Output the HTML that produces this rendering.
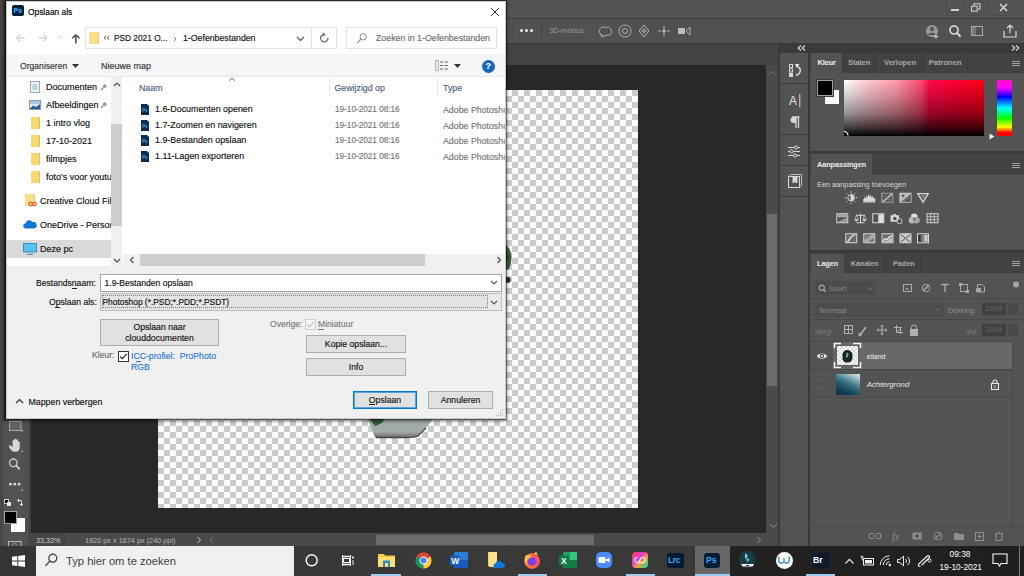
<!DOCTYPE html>
<html><head><meta charset="utf-8">
<style>
*{margin:0;padding:0;box-sizing:border-box}
html,body{width:1024px;height:576px;overflow:hidden;background:#282828;font-family:"Liberation Sans",sans-serif}
.a{position:absolute}
.t{position:absolute;white-space:pre;line-height:1}
.d .t,.dt{-webkit-text-stroke:0.15px currentColor}
</style></head><body>
<div class="a" style="left:0;top:0;width:1024px;height:576px;overflow:hidden">

<!-- ===== PHOTOSHOP BACKGROUND ===== -->
<div class="a" id="menubar" style="left:0;top:0;width:1024px;height:18px;background:#535353"></div>
<div class="a" style="left:0;top:18px;width:1024px;height:1px;background:#3e3e3e"></div>
<div class="a" id="optbar" style="left:0;top:19px;width:1024px;height:24px;background:#515151"></div>
<div class="a" style="left:0;top:43px;width:1024px;height:1px;background:#383838"></div>
<div class="a" id="tabbar" style="left:0;top:44px;width:778px;height:21px;background:#434343"></div>
<!-- canvas area -->
<div class="a" id="canvasbg" style="left:31px;top:65px;width:735px;height:468px;background:#282828"></div>
<!-- left toolbar -->
<div class="a" id="toolbar" style="left:0;top:44px;width:31px;height:502px;background:linear-gradient(to right,#505050 0,#535353 20px,#4e4e4e 28px,#3a3a3a 31px)"></div>
<!-- canvas checker -->
<div class="a" id="checker" style="left:158px;top:90px;width:480px;height:418px;background-color:#fff;background-image:linear-gradient(45deg,#cbcbcb 25%,transparent 25%,transparent 75%,#cbcbcb 75%),linear-gradient(45deg,#cbcbcb 25%,transparent 25%,transparent 75%,#cbcbcb 75%);background-size:12px 12px;background-position:0 0,6px 6px"></div>

<!-- vertical scrollbar -->
<div class="a" style="left:766px;top:65px;width:12px;height:468px;background:#4a4a4a"></div>
<div class="a" style="left:767px;top:214px;width:10px;height:172px;background:#6b6b6b"></div>
<!-- status bar -->
<div class="a" id="status" style="left:30px;top:533px;width:748px;height:13px;background:#4a4a4a"></div>
<div class="a" style="left:30px;top:533px;width:36px;height:13px;background:#464646"></div>
<div class="a" style="left:376px;top:535px;width:218px;height:10px;background:#6b6b6b"></div>

<!-- right panel column -->
<div class="a" style="left:778px;top:43px;width:246px;height:503px;background:#3a3a3a"></div>
<div class="a" id="iconcol" style="left:780px;top:53px;width:28px;height:493px;background:#535353"></div>
<div class="a" id="mainpanel" style="left:810px;top:53px;width:214px;height:493px;background:#535353"></div>


<!-- window controls -->
<div class="a" style="left:946px;top:0;width:78px;height:16px;border-left:1px solid #4a4a4a;border-bottom:1px solid #4c4c4c"></div>
<div class="a" style="left:963px;top:0;width:1px;height:15px;background:#4d4d4d"></div>
<div class="a" style="left:988px;top:0;width:1px;height:15px;background:#4d4d4d"></div>
<div class="a" style="left:951px;top:9px;width:8px;height:1.5px;background:#d0d0d0"></div>
<svg class="a" style="left:971px;top:3px" width="10" height="9" viewBox="0 0 10 9"><rect x="0.6" y="3.2" width="5.6" height="5" fill="none" stroke="#d0d0d0" stroke-width="1.1"/><path d="M3 3V0.8H9V6H6.4" fill="none" stroke="#d0d0d0" stroke-width="1.1"/></svg>
<svg class="a" style="left:999px;top:3px" width="9" height="9" viewBox="0 0 9 9"><path d="M1 1L8 8M8 1L1 8" stroke="#d8d8d8" stroke-width="1.5"/></svg>
<!-- options bar -->
<div class="a" style="left:512px;top:24px;width:1px;height:14px;background:#484848"></div>
<div class="a" style="left:520px;top:29px;width:3px;height:3px;border-radius:50%;background:#e6e6e6"></div>
<div class="a" style="left:525px;top:29px;width:3px;height:3px;border-radius:50%;background:#e6e6e6"></div>
<div class="a" style="left:530px;top:29px;width:3px;height:3px;border-radius:50%;background:#e6e6e6"></div>
<div class="a" style="left:541px;top:24px;width:1px;height:14px;background:#444"></div>
<div class="t" style="left:549px;top:26.8px;font-size:7.7px;letter-spacing:-0.1px;color:#969696">3D-modus:</div>
<svg class="a" style="left:597px;top:23px" width="96" height="16" viewBox="0 0 96 16" fill="none" stroke="#b0b0b0" stroke-width="1">
 <path d="M2 8C3 4 7 3 9 5C11 3 15 5 14 8C16 10 13 13 10 12C8 14 3 13 2 8Z"/><path d="M3 11L6 13L4 14" />
 <circle cx="28" cy="8" r="6"/><circle cx="28" cy="8" r="2.5"/>
 <path d="M47 2L52 8L47 14L42 8Z"/><path d="M44 8H50M47 5V11"/>
 <path d="M67 3V6M67 10V13M61 8H64M70 8H73"/><circle cx="67" cy="8" r="1.3" fill="#bdbdbd"/>
 <rect x="81" y="5" width="7" height="6" fill="#bdbdbd" stroke="none"/><path d="M89 8L93 4V12Z"/>
</svg>
<svg class="a" style="left:922px;top:22px" width="96" height="18" viewBox="0 0 96 18">
 <circle cx="10" cy="9" r="6" fill="#9a9a9a"/><circle cx="10" cy="7" r="2.2" fill="#535353"/><path d="M6 13C7 10 13 10 14 13Z" fill="#535353"/><path d="M14 12V17M11.5 14.5H16.5" stroke="#cfcfcf" stroke-width="1"/>
 <circle cx="32" cy="8" r="4" fill="none" stroke="#e0e0e0" stroke-width="1.6"/><path d="M35 11L38.5 14.5" stroke="#e0e0e0" stroke-width="1.8"/>
 <rect x="49.5" y="4.5" width="11" height="9" fill="none" stroke="#a8a8a8"/><rect x="50" y="5" width="4" height="8" fill="#777"/>
 <path d="M82 9V15H94V9" fill="none" stroke="#d8d8d8" stroke-width="1.2"/><path d="M88 11V3M85 6L88 3L91 6" fill="none" stroke="#d8d8d8" stroke-width="1.2"/>
</svg>

<!-- right panel strip -->
<svg class="a" style="left:797px;top:45px" width="9" height="6" viewBox="0 0 9 6"><path d="M4 0.5L1.2 3L4 5.5M8 0.5L5.2 3L8 5.5" stroke="#d8d8d8" stroke-width="1.2" fill="none"/></svg>
<svg class="a" style="left:1011px;top:45px" width="9" height="6" viewBox="0 0 9 6"><path d="M1 0.5L3.8 3L1 5.5M5 0.5L7.8 3L5 5.5" stroke="#d8d8d8" stroke-width="1.2" fill="none"/></svg>
<!-- icon column groups -->
<div class="a" style="left:780px;top:53px;width:28px;height:30px;background:#535353"></div>
<div class="a" style="left:780px;top:83px;width:28px;height:1px;background:#3e3e3e"></div>
<div class="a" style="left:780px;top:134px;width:28px;height:1px;background:#3e3e3e"></div>
<div class="a" style="left:780px;top:165px;width:28px;height:1px;background:#3e3e3e"></div>
<div class="a" style="left:780px;top:196px;width:28px;height:1px;background:#3e3e3e"></div>
<svg class="a" style="left:780px;top:53px" width="28" height="143" viewBox="0 0 28 143" fill="none" stroke="#d8d8d8">
 <path d="M7 3.5H21M7 5H21" stroke="#5e5e5e" stroke-width="0.6" stroke-dasharray="1 1"/>
 <rect x="9.5" y="11.5" width="3" height="3"/><rect x="9.5" y="16" width="3" height="3"/><rect x="9" y="20" width="4" height="4" fill="#d8d8d8" stroke="none"/>
 <path d="M15 11L19.5 11L16.5 14.8Z" fill="#e8e8e8" stroke="none"/><path d="M16.8 13.3Q20.8 14.5 20.2 18.2Q19.6 21.8 15.8 22.2" stroke-width="1.5"/>
 <path d="M7 34.5H21M7 36H21" stroke="#5e5e5e" stroke-width="0.6" stroke-dasharray="1 1"/>
 <text x="9" y="51.8" font-family="Liberation Sans" font-size="12" fill="#e0e0e0" stroke="none">A</text><path d="M19.8 41V54" stroke-width="1"/>
 <path d="M12 64H19.5M16 64V75M18.5 64V75" stroke-width="1.3"/><path d="M16 64H13.5A3 3 0 0 0 13.5 70H16Z" fill="#d8d8d8" stroke="none"/>
 <path d="M7 85.5H21M7 87H21" stroke="#5e5e5e" stroke-width="0.6" stroke-dasharray="1 1"/>
 <path d="M8 94.5H20M8 98.5H20M8 102.5H20" stroke-width="1"/><circle cx="16" cy="94.5" r="1.6" fill="#535353"/><circle cx="11.5" cy="98.5" r="1.6" fill="#535353"/><circle cx="15" cy="102.5" r="1.6" fill="#535353"/>
 <path d="M7 116.5H21M7 118H21" stroke="#5e5e5e" stroke-width="0.6" stroke-dasharray="1 1"/>
 <rect x="8.5" y="123.5" width="11" height="11"/><path d="M13 124V130L15 128.5L17 130V124" fill="#d8d8d8"/><path d="M8.5 123.5L10.5 121.5H21.5V132.5L19.5 134.5" stroke-width="0.8"/>
</svg>

<!-- Kleur panel tabs -->
<div class="a" style="left:810px;top:53px;width:214px;height:20px;background:#424242"></div>
<div class="a" style="left:811px;top:53px;width:31px;height:20px;background:#535353"></div>
<div class="a" style="left:842px;top:53px;width:1px;height:20px;background:#3a3a3a"></div>
<div class="a" style="left:875px;top:53px;width:1px;height:20px;background:#3a3a3a"></div>
<div class="a" style="left:923px;top:53px;width:1px;height:20px;background:#3a3a3a"></div>
<div class="a" style="left:967px;top:53px;width:1px;height:20px;background:#3a3a3a"></div>
<div class="t" style="left:817.5px;top:59.3px;font-size:7.6px;letter-spacing:-0.25px;font-weight:bold;color:#f0f0f0">Kleur</div>
<div class="t" style="left:848px;top:59.3px;font-size:7.6px;letter-spacing:-0.1px;font-weight:bold;color:#a8a8a8">Stalen</div>
<div class="t" style="left:884px;top:59.3px;font-size:7.6px;font-weight:bold;color:#a8a8a8">Verlopen</div>
<div class="t" style="left:928.7px;top:59.3px;font-size:7.6px;font-weight:bold;color:#a8a8a8">Patronen</div>
<svg class="a" style="left:1011px;top:60px" width="10" height="7" viewBox="0 0 10 7"><path d="M1 1.5H9M1 3.5H9M1 5.5H9" stroke="#a0a0a0" stroke-width="1"/></svg>
<!-- swatches -->
<div class="a" style="left:825px;top:89.5px;width:14px;height:14px;background:#fff"></div>
<div class="a" style="left:816.5px;top:80px;width:16px;height:16px;background:#000;border:1px solid #9e9e9e;box-shadow:0 0 0 1px #3a3a3a"></div>
<!-- color field -->
<div class="a" style="left:844px;top:79.5px;width:140px;height:56.5px;background:linear-gradient(to bottom,rgba(0,0,0,0) 0%,rgba(0,0,0,.18) 30%,rgba(0,0,0,.42) 60%,rgba(0,0,0,.75) 85%,#000 100%),linear-gradient(to right,#fff 0%,#ffc8d2 18%,#ff98aa 38%,#ff4a70 55%,#ff0848 61%,#ff0030 80%,#ff0018 100%)"></div>
<svg class="a" style="left:839px;top:130px" width="12" height="12" viewBox="0 0 12 12"><path d="M5 1.5A4 4 0 0 1 9 5.5" stroke="#fff" stroke-width="1.2" fill="none"/><path d="M5 3A2.6 2.6 0 0 1 7.6 5.6" stroke="#000" stroke-width="1" fill="none"/></svg>
<div class="a" style="left:997px;top:79.5px;width:14.5px;height:56.5px;background:linear-gradient(to bottom,#ff10c0 0%,#ff00ff 14%,#0000ff 30%,#00ffff 50%,#00ff00 68%,#ffff00 84%,#ff0000 94%,#ff0000 100%)"></div>
<svg class="a" style="left:989px;top:133px" width="6" height="7" viewBox="0 0 6 7"><path d="M0.5 0.5L5.5 3.5L0.5 6.5Z" fill="#f0f0f0"/></svg>
<div class="a" style="left:810px;top:151px;width:214px;height:2px;background:#3a3a3a"></div>

<!-- Aanpassingen -->
<div class="a" style="left:810px;top:153px;width:214px;height:22px;background:#424242"></div>
<div class="a" style="left:811px;top:154px;width:61px;height:21px;background:#535353"></div>
<div class="t" style="left:817px;top:160.5px;font-size:7.2px;font-weight:bold;color:#f0f0f0">Aanpassingen</div>
<svg class="a" style="left:1011px;top:162px" width="10" height="7" viewBox="0 0 10 7"><path d="M1 1.5H9M1 3.5H9M1 5.5H9" stroke="#a0a0a0" stroke-width="1"/></svg>
<div class="t" style="left:817px;top:180.5px;font-size:7.35px;color:#d6d6d6">Een aanpassing toevoegen</div>
<svg class="a" style="left:830px;top:190px" width="120" height="56" viewBox="0 0 120 56" fill="none" stroke="#d8d8d8" stroke-width="1"><defs><linearGradient id="gm"><stop offset="0" stop-color="#222"/><stop offset="1" stop-color="#eee"/></linearGradient></defs><g transform="translate(15.00,2.75)"><circle cx="6" cy="5" r="3.2"/><path d="M6 1.8A3.2 3.2 0 0 1 6 8.2Z" fill="#d8d8d8"/><path d="M6 -1.5V0.2M6 9.8V11.5M-0.5 5H1.2M10.8 5H12.5M1.5 0.5L2.6 1.6M9.4 8.4L10.5 9.5M1.5 9.5L2.6 8.4M9.4 1.6L10.5 0.5" stroke-width="0.9"/></g><g transform="translate(33.25,2.75)"><path d="M0 10V7L1.5 4L2.5 6L3.5 2L4.5 5L5.5 1L6.5 4L7.5 2L8.5 5L9.5 3L10.5 6L12 5V10Z" fill="#d8d8d8" stroke="none"/><path d="M0 9.5H12" stroke="#888"/></g><g transform="translate(51.25,2.75)"><rect x="0.5" y="0.5" width="11" height="9" stroke="#a0a0a0"/><path d="M4 0.5V9.5M8 0.5V9.5M0.5 3.5H11.5M0.5 6.5H11.5" stroke="#7a7a7a" stroke-width="0.7"/><path d="M1 9C4 8 6 5 11 1" stroke="#d8d8d8" stroke-width="1.1"/></g><g transform="translate(69.50,2.75)"><rect x="0.5" y="0.5" width="11" height="9" fill="#bdbdbd" stroke="#d8d8d8"/><path d="M1 9.5L11.5 1V9.5Z" fill="#6a6a6a" stroke="none"/><path d="M2 3H5M3.5 1.5V4.5M7 7.5H10" stroke="#333" stroke-width="0.8"/></g><g transform="translate(87.00,2.75)"><path d="M0.8 0.8H11.2L6 9.5Z" stroke-width="1.3"/><path d="M3.5 2.5H8.5L6 6.5Z" fill="#8a8a8a" stroke="none"/></g><g transform="translate(6.25,23.25)"><rect x="0.5" y="0.5" width="11" height="9"/><rect x="1" y="1" width="10" height="3" fill="#9a9a9a" stroke="none"/><path d="M3.5 1V4M6 1V4M8.5 1V4" stroke-width="0.6"/><path d="M1 9L11 4V9Z" fill="#c8c8c8" stroke="none" opacity=".6"/></g><g transform="translate(24.50,23.25)"><path d="M6 0.5V9.5M2 9.5H10M1.5 2H10.5" stroke-width="1"/><path d="M0 6A2 2 0 0 0 4 6ZM8 6A2 2 0 0 0 12 6Z" fill="#d8d8d8" stroke="none"/><path d="M2 2L0.3 6M2 2L3.7 6M10 2L8.3 6M10 2L11.7 6" stroke-width="0.7"/></g><g transform="translate(42.25,23.25)"><rect x="0.5" y="0.5" width="11" height="9"/><rect x="6" y="1" width="5.5" height="8.5" fill="#e0e0e0" stroke="none"/></g><g transform="translate(60.00,23.25)"><rect x="0.5" y="2" width="8.5" height="6.5" fill="#d8d8d8" stroke="none"/><rect x="3" y="0.8" width="3" height="1.5" fill="#d8d8d8" stroke="none"/><circle cx="4.8" cy="5.2" r="1.8" fill="#535353" stroke="none"/><circle cx="9.5" cy="8" r="2.6" fill="#535353" stroke="#d8d8d8" stroke-width="0.9"/></g><g transform="translate(78.25,23.25)"><circle cx="6" cy="3.5" r="3.3" fill="#e0e0e0" stroke="none"/><circle cx="3.8" cy="7" r="3.3" fill="#bcbcbc" stroke="none"/><circle cx="8.2" cy="7" r="3.3" fill="#a5a5a5" stroke="none"/><circle cx="6" cy="5.8" r="1.5" fill="#707070" stroke="none"/></g><g transform="translate(96.50,23.25)"><rect x="0.5" y="0.5" width="11" height="9"/><path d="M0.5 3.5H11.5M0.5 6.5H11.5M4.2 0.5V9.5M7.8 0.5V9.5" stroke-width="0.8"/></g><g transform="translate(15.25,43.25)"><rect x="0.5" y="0.5" width="11" height="9" fill="#6a6a6a"/><path d="M2 8.5C4 8 5 2 10 1.5" stroke-width="1.6"/></g><g transform="translate(33.25,43.25)"><rect x="0.5" y="0.5" width="11" height="9" fill="#7a7a7a"/><path d="M1 8L10 1.5M3 9L11 3" stroke="#bdbdbd" stroke-width="1.4"/></g><g transform="translate(51.50,43.25)"><rect x="0.5" y="0.5" width="11" height="9" fill="#6a6a6a"/><path d="M1 8L3.5 5.5L5.5 6.5L8 3.5L11 2.5" stroke-width="1.6"/><path d="M1 9.5L3.5 7L5.5 8L8 5L11 4V9.5Z" fill="#bdbdbd" stroke="none"/></g><g transform="translate(69.50,43.25)"><rect x="0.5" y="0.5" width="11" height="9" fill="#c8c8c8"/><path d="M1 1L6 5L11 1M1 9L6 5L11 9" stroke="#5a5a5a" stroke-width="1"/></g><g transform="translate(87.00,43.25)"><rect x="0.5" y="0.5" width="11" height="9"/><rect x="1.5" y="1.5" width="9" height="7" fill="url(#gm)" stroke="none"/></g></svg>
<div class="a" style="left:810px;top:250px;width:214px;height:3px;background:#3a3a3a"></div>

<!-- Lagen -->
<div class="a" style="left:810px;top:253px;width:214px;height:20px;background:#424242"></div>
<div class="a" style="left:811px;top:254px;width:33px;height:19px;background:#535353"></div>
<div class="a" style="left:884px;top:254px;width:1px;height:19px;background:#3a3a3a"></div>
<div class="a" style="left:920px;top:254px;width:1px;height:19px;background:#3a3a3a"></div>
<div class="t" style="left:817px;top:260px;font-size:7.2px;font-weight:bold;color:#f0f0f0">Lagen</div>
<div class="t" style="left:850.8px;top:260px;font-size:7.2px;font-weight:bold;color:#a8a8a8">Kanalen</div>
<div class="t" style="left:893px;top:260px;font-size:7.2px;font-weight:bold;color:#a8a8a8">Paden</div>
<svg class="a" style="left:1011px;top:260px" width="10" height="7" viewBox="0 0 10 7"><path d="M1 1.5H9M1 3.5H9M1 5.5H9" stroke="#a0a0a0" stroke-width="1"/></svg>
<!-- filter row -->
<div class="a" style="left:815px;top:281px;width:61px;height:14px;background:#4b4b4b;border-radius:1px"></div>
<svg class="a" style="left:818px;top:284px" width="9" height="9" viewBox="0 0 9 9"><circle cx="3.8" cy="3.8" r="2.6" fill="none" stroke="#aaa" stroke-width="1.2"/><path d="M5.7 5.7L8 8" stroke="#aaa" stroke-width="1.4"/></svg>
<div class="t" style="left:829px;top:284.5px;font-size:7.2px;color:#888">Soort</div>
<svg class="a" style="left:868px;top:287px" width="5" height="4" viewBox="0 0 5 4"><path d="M0.5 0.5L2.5 3L4.5 0.5" stroke="#777" fill="none"/></svg>
<svg class="a" style="left:900px;top:281px" width="120" height="14" viewBox="0 0 120 14" fill="none" stroke="#a9a9a9">
 <rect x="3.5" y="3.5" width="8" height="7"/><path d="M5 9L7 7L9 9" />
 <circle cx="26" cy="7" r="3.8"/><path d="M23.3 9.7L28.7 4.3" stroke-width="1.5"/>
 <path d="M41 3.5H49M45 3.5V11" stroke-width="1.4"/>
 <rect x="60.5" y="3.5" width="7" height="7"/><rect x="59" y="2" width="3" height="3" fill="#a9a9a9" stroke="none"/><rect x="66" y="9" width="3" height="3" fill="#a9a9a9" stroke="none"/>
 <path d="M77.5 3.5H82L84.5 6V11H77.5Z"/><rect x="76" y="7" width="5" height="4" fill="#a9a9a9" stroke="none"/>
 <circle cx="116" cy="3.5" r="3" fill="#a5a5a5" stroke="none"/>
</svg>
<div class="a" style="left:810px;top:298px;width:214px;height:1px;background:#484848"></div>
<!-- blend row -->
<div class="a" style="left:815px;top:303px;width:129px;height:14px;background:#4d4d4d"></div>
<div class="t" style="left:819.5px;top:306.5px;font-size:7.2px;color:#8c8c8c">Normaal</div>
<svg class="a" style="left:935px;top:308px" width="5" height="4" viewBox="0 0 5 4"><path d="M0.5 0.5L2.5 3L4.5 0.5" stroke="#6e6e6e" fill="none"/></svg>
<div class="t" style="left:948px;top:306.5px;font-size:7.2px;color:#8c8c8c">Dekking:</div>
<div class="a" style="left:982px;top:303px;width:24px;height:12px;background:#404040"></div>
<div class="t" style="left:985px;top:306px;font-size:6.8px;color:#6a6a6a">100%</div>
<div class="a" style="left:1008px;top:303px;width:10px;height:12px;background:#4a4a4a"></div>
<div class="a" style="left:810px;top:319px;width:214px;height:1px;background:#484848"></div>
<!-- lock row -->
<div class="t" style="left:815px;top:327.5px;font-size:7.2px;color:#7e7e7e">Vergr.:</div>
<svg class="a" style="left:842px;top:323px" width="80" height="14" viewBox="0 0 80 14" fill="none" stroke="#b0b0b0">
 <rect x="2.5" y="2.5" width="8" height="8"/><path d="M2.5 6.5H10.5M6.5 2.5V10.5" />
 <path d="M18 12L24 4" stroke-width="1.6"/><circle cx="18" cy="11.5" r="1.3" fill="#b0b0b0"/>
 <path d="M40 2V12M35 7H45M40 2L38.5 3.5M40 2L41.5 3.5M40 12L38.5 10.5M40 12L41.5 10.5M35 7L36.5 5.5M35 7L36.5 8.5M45 7L43.5 5.5M45 7L43.5 8.5"/>
 <path d="M52 4.5H58.5V11M54.5 2V9.5H61M54.5 9.5L60 4"/>
 <rect x="68.5" y="6.5" width="7" height="6" fill="#b0b0b0"/><path d="M69.5 6.5V4.5A2.5 2.5 0 0 1 74.5 4.5V6.5"/>
</svg>
<div class="t" style="left:966px;top:327.5px;font-size:7.2px;color:#7e7e7e">Vul:</div>
<div class="a" style="left:982px;top:324px;width:24px;height:12px;background:#404040"></div>
<div class="t" style="left:985px;top:327px;font-size:6.8px;color:#6a6a6a">100%</div>
<div class="a" style="left:1008px;top:324px;width:10px;height:12px;background:#4a4a4a"></div>
<!-- layer rows -->
<div class="a" style="left:810px;top:341px;width:202px;height:1px;background:#484848"></div>
<div class="a" style="left:833px;top:342px;width:179px;height:27px;background:#686868"></div>
<svg class="a" style="left:816px;top:352px" width="12" height="8" viewBox="0 0 12 8"><path d="M0.8 4C3 0.5 9 0.5 11.2 4C9 7.5 3 7.5 0.8 4Z" fill="#e8e8e8"/><circle cx="6" cy="4" r="2.2" fill="#535353"/><circle cx="6" cy="4" r="1" fill="#e8e8e8"/></svg>
<svg class="a" style="left:833px;top:342px" width="29" height="27" viewBox="0 0 29 27">
 <defs><pattern id="ck" width="4" height="4" patternUnits="userSpaceOnUse"><rect width="4" height="4" fill="#fbfbfb"/><rect width="2" height="2" fill="#d9d9d9"/><rect x="2" y="2" width="2" height="2" fill="#d9d9d9"/></pattern></defs>
 <path d="M1.5 6V1.5H8M20 1.5H27.5V6M27.5 20V25.5H20M8 25.5H1.5V20" stroke="#f0f0f0" stroke-width="1.6" fill="none"/>
 <rect x="3" y="3" width="23" height="21" fill="#5e5e5e"/>
 <rect x="4" y="4" width="21" height="19" fill="url(#ck)"/>
 <path d="M14 8C17 8 20 10.5 19.5 14C20 18 17.5 21 14.5 20.5C11 21 9 18 9.5 14.5C9 11 11 8 14 8Z" fill="#17271f"/>
 <path d="M13.5 10.5L15.5 11L15 15L13 16Z" fill="#8e9a94"/>
</svg>
<div class="t" style="left:866.75px;top:352.5px;font-size:7.0px;color:#f0f0f0">eiland</div>
<div class="a" style="left:810px;top:369px;width:202px;height:1px;background:#474747"></div>
<div class="a" style="left:816px;top:380px;width:10px;height:9px;border:1px solid #5c5c5c"></div>
<div class="a" style="left:836px;top:374px;width:24px;height:21px;background:linear-gradient(205deg,#e4ecee 0%,#8fb2bb 22%,#3c7586 45%,#16495b 70%,#0b3040 100%)"></div>
<div class="t" style="left:866.75px;top:381px;font-size:7.8px;font-style:italic;color:#e8e8e8">Achtergrond</div>
<svg class="a" style="left:990px;top:379px" width="10" height="11" viewBox="0 0 10 11"><rect x="1.5" y="4.5" width="7" height="6" fill="none" stroke="#e8e8e8" stroke-width="1.1"/><path d="M3 4.5V3A2 2 0 0 1 7 3V4.5" fill="none" stroke="#e8e8e8" stroke-width="1.1"/><rect x="4.5" y="6.5" width="1" height="2" fill="#e8e8e8"/></svg>
<div class="a" style="left:810px;top:397px;width:202px;height:1px;background:#4a4a4a"></div>
<div class="a" style="left:1012px;top:342px;width:1px;height:184px;background:#4a4a4a"></div>
<!-- bottom bar -->
<div class="a" style="left:810px;top:526px;width:214px;height:1px;background:#484848"></div>
<svg class="a" style="left:868px;top:529px" width="140" height="14" viewBox="0 0 140 14" fill="none" stroke="#8e8e8e" stroke-width="1.1">
 <path d="M6 4.5H3.5A2.5 2.5 0 0 0 3.5 9.5H6M8 4.5H10.5A2.5 2.5 0 0 1 10.5 9.5H8M5 7H9"/>
 <text x="24" y="11" font-family="Liberation Serif" font-style="italic" font-size="10" fill="#8e8e8e" stroke="none">fx</text>
 <rect x="44.5" y="3.5" width="9" height="7" fill="#8e8e8e" stroke="none"/><circle cx="49" cy="7" r="2" fill="#535353" stroke="none"/>
 <circle cx="70" cy="7" r="3.8"/><path d="M67.3 9.7L72.7 4.3" stroke-width="1.4"/>
 <path d="M86 4H90L91 5H96V11H86Z" fill="#8e8e8e" stroke="none"/>
 <rect x="107.5" y="3.5" width="8" height="8"/><path d="M111.5 5.5V9.5M109.5 7.5H113.5"/>
 <path d="M127 4.5H135M128 5V11.5H134V5M130 3H132" />
</svg>

<!-- left toolbar icons -->
<div class="a" style="left:0;top:44px;width:3px;height:502px;background:#474747"></div>
<svg class="a" style="left:0;top:410px" width="30" height="136" viewBox="0 0 30 136" fill="none" stroke="#cfcfcf">
 <rect x="9.5" y="11.5" width="11.5" height="9" stroke="#a8a8a8" fill="#626262"/><path d="M23 19.5L23 21.5L21 21.5Z" fill="#bbb" stroke="none"/>
 <path d="M11.5 40.5C9.5 38 8.3 36 9.6 35.3C10.8 34.7 11.8 36.5 12.6 37.3V30.8C12.6 29.6 14.4 29.6 14.4 30.8V35.2V29.6C14.4 28.4 16.2 28.4 16.2 29.6V35.2V30.2C16.2 29 18 29 18 30.2V35.5V32C18 30.9 19.7 30.9 19.7 32V37.2C19.7 40.2 18 41.7 15.3 41.7C13.4 41.7 12.4 41.4 11.5 40.5Z" fill="#d8d8d8" stroke="none"/><path d="M23 40L23 42L21 42Z" fill="#bbb" stroke="none"/>
 <circle cx="13.3" cy="52.8" r="3.8" stroke-width="1.3"/><path d="M16.2 55.7L19.8 59.3" stroke-width="1.8"/>
 <circle cx="10.5" cy="74.2" r="1.4" fill="#d8d8d8" stroke="none"/><circle cx="14.8" cy="74.2" r="1.4" fill="#d8d8d8" stroke="none"/><circle cx="19.1" cy="74.2" r="1.4" fill="#d8d8d8" stroke="none"/><path d="M23 79L23 81L21 81Z" fill="#bbb" stroke="none"/>
 <rect x="4.5" y="89.5" width="4" height="4" fill="#000" stroke="#ddd" stroke-width="0.9"/><rect x="7" y="92" width="4" height="4" fill="#e8e8e8" stroke="none"/>
 <path d="M21 90.5H17.5M19 89L17.5 90.5L19 92M21.5 90.5V95.5M20 94L21.5 95.5L23 94" stroke="#ddd" stroke-width="1"/>
 <rect x="8.5" y="131.5" width="12.5" height="9" stroke="#bbb"/><circle cx="14.8" cy="136" r="2.6" stroke="#999" stroke-width="0.8"/>
</svg>
<div class="a" style="left:11px;top:518px;width:14px;height:14px;background:#fff"></div>
<div class="a" style="left:3.8px;top:510.8px;width:13.5px;height:13.5px;background:#000;border:1px solid #a0a0a0"></div>
<!-- status bar texts -->
<div class="t" style="left:36px;top:536.5px;font-size:7.2px;color:#d0d0d0">33,33%</div>
<div class="t" style="left:85px;top:536.5px;font-size:7.3px;color:#b8b8b8">1920 px x 1674 px (240 ppi)</div>
<svg class="a" style="left:196px;top:536px" width="20" height="8" viewBox="0 0 20 8"><path d="M1.5 1L4.5 4L1.5 7" stroke="#c8c8c8" fill="none"/><path d="M17 1L14 4L17 7" stroke="#7a7a7a" fill="none"/></svg>
<svg class="a" style="left:756px;top:536px" width="6" height="8" viewBox="0 0 6 8"><path d="M1.5 1L4.5 4L1.5 7" stroke="#9a9a9a" fill="none"/></svg>
<svg class="a" style="left:768px;top:70px" width="9" height="6" viewBox="0 0 9 6"><path d="M1 5L4.5 1.5L8 5" stroke="#6a6a6a" fill="none"/></svg>
<svg class="a" style="left:769px;top:523px" width="9" height="6" viewBox="0 0 9 6"><path d="M1 1L4.5 4.5L8 1" stroke="#8a8a8a" fill="none"/></svg>
<!-- island pieces -->
<svg class="a" style="left:360px;top:416px" width="80" height="26" viewBox="0 0 80 26">
 <defs><linearGradient id="isl" x1="0" y1="0" x2="0" y2="1"><stop offset="0" stop-color="#9fa9a7"/><stop offset=".7" stop-color="#a3acab"/><stop offset="1" stop-color="#6d6a68"/></linearGradient></defs>
 <path d="M7 2L74 2L66 12L58 20Q52 22 40 21.5L16 21.5Q14 20 12 14Z" fill="url(#isl)"/>
 <path d="M16 21.5L40 21.5Q52 22 58 20L66 12" stroke="#4a4544" stroke-width="1.3" fill="none"/>
 <path d="M9 2H25L22 7L15 10Z" fill="#2f5c36"/>
</svg>
<svg class="a" style="left:505px;top:240px" width="10" height="52" viewBox="0 0 10 52">
 <path d="M1 5C3 6 5 9 6 14C7 20 6 25 4 29L1 30Z" fill="#3a5f38"/>
 <path d="M1 12L4 16L2 22Z" fill="#1f3a22"/>
 <ellipse cx="2.5" cy="40" rx="3" ry="3" fill="#22332a"/>
</svg>
<!-- ===== DIALOG ===== -->
<div class="a" style="left:0;top:0;width:6px;height:421px;background:linear-gradient(to right,#464646 0,#434343 3px,#2e2e2e 4px,#2a2a2a 6px)"></div>
<div class="d">
<div class="a" id="dlgshadow" style="left:6px;top:1px;width:500px;height:418px;box-shadow:0 0 0 1px rgba(0,0,0,.3),0 1px 3px 1px rgba(0,0,0,.55)"></div>

<div class="a" id="dlg" style="left:6px;top:1px;width:500px;height:418px;background:#f0f0f0;border:1px solid #c9c9c9"></div>
<!-- title + nav white area -->
<div class="a" style="left:7px;top:2px;width:498px;height:52px;background:#fff"></div>
<!-- Ps app icon -->
<div class="a" style="left:12px;top:5px;width:12px;height:11px;background:#001e36;border-radius:2px"></div>
<div class="t" style="left:13.5px;top:7px;font-size:7px;font-weight:bold;color:#31a8ff">Ps</div>
<div class="t" style="left:28px;top:7.8px;font-size:8.4px;color:#000">Opslaan als</div>
<!-- close X -->
<svg class="a" style="left:490px;top:7px" width="10" height="10" viewBox="0 0 10 10"><path d="M1 1L9 9M9 1L1 9" stroke="#222" stroke-width="0.95"/></svg>
<!-- nav arrows -->
<svg class="a" style="left:6px;top:26px" width="80" height="24" viewBox="0 0 80 24">
 <path d="M10.5 11.8H18.5M10.5 11.8L14 8.3M10.5 11.8L14 15.3" stroke="#cdcdcd" stroke-width="1.2" fill="none"/>
 <path d="M41 11.8H32.5M41 11.8L37.5 8.3M41 11.8L37.5 15.3" stroke="#cdcdcd" stroke-width="1.2" fill="none"/>
 <path d="M52.5 10.5L54.5 12.5L56.5 10.5" stroke="#d0d0d0" stroke-width="1" fill="none"/>
 <path d="M69.8 17.5V9M69.8 8.8L66.2 12.3M69.8 8.8L73.4 12.3" stroke="#4a4a4a" stroke-width="1.5" fill="none"/>
</svg>
<!-- address box -->
<div class="a" style="left:85px;top:27px;width:252px;height:22px;border:1px solid #e3e3e3;background:#fff"></div>
<div class="a" style="left:311px;top:28px;width:1px;height:20px;background:#e3e3e3"></div>
<div class="a" style="left:89px;top:32px;width:10px;height:11.5px;background:#f9df86;border-right:1px solid #ead07a"></div>
<svg class="a" style="left:103px;top:35px" width="7" height="6" viewBox="0 0 7 6"><path d="M3.2 0.8L1 2.8L3.2 4.8M6.2 0.8L4 2.8L6.2 4.8" stroke="#5a5a5a" stroke-width="1" fill="none"/></svg>
<div class="t" style="left:114px;top:34.3px;font-size:8.3px;color:#111">PSD 2021 O...</div>
<svg class="a" style="left:172.5px;top:36px" width="5" height="6" viewBox="0 0 5 6"><path d="M1 0.8L3 3L1 5.2" stroke="#888" stroke-width="1" fill="none"/></svg>
<div class="t" style="left:183px;top:34.3px;font-size:8.75px;color:#111">1-Oefenbestanden</div>
<svg class="a" style="left:296px;top:36px" width="9" height="6" viewBox="0 0 9 6"><path d="M1 1L4.5 4.5L8 1" stroke="#555" stroke-width="1.1" fill="none"/></svg>
<svg class="a" style="left:319px;top:32px" width="11" height="12" viewBox="0 0 11 12"><path d="M5.5 2.5A3.7 3.7 0 1 0 9 6" stroke="#555" stroke-width="1.1" fill="none"/><path d="M3.5 1L6 2.6L4 4.6" stroke="#555" stroke-width="1" fill="none"/></svg>
<!-- search box -->
<div class="a" style="left:346px;top:27px;width:151px;height:22px;border:1px solid #e3e3e3;background:#fff"></div>
<svg class="a" style="left:356px;top:32px" width="12" height="12" viewBox="0 0 12 12"><circle cx="7.2" cy="4.8" r="3.2" stroke="#8a8a8a" fill="none" stroke-width="1"/><path d="M4.8 7.2L1.2 10.8" stroke="#8a8a8a" stroke-width="1.1"/></svg>
<div class="t" style="left:376px;top:34.3px;font-size:8.8px;color:#6d6d6d">Zoeken in 1-Oefenbestanden</div>
<!-- toolbar -->
<div class="a" style="left:7px;top:54px;width:498px;height:23px;background:#f4f6f8"></div>
<div class="a" style="left:7px;top:76px;width:498px;height:1px;background:#e8ebef"></div>
<div class="t" style="left:20px;top:61.5px;font-size:8.6px;color:#333">Organiseren</div>
<svg class="a" style="left:72px;top:64px" width="7" height="5" viewBox="0 0 7 5"><path d="M0 0H7L3.5 4Z" fill="#333"/></svg>
<div class="t" style="left:101px;top:61.5px;font-size:9px;color:#333">Nieuwe map</div>
<svg class="a" style="left:435px;top:60px" width="14" height="11" viewBox="0 0 14 11"><rect x="0.5" y="0.5" width="3" height="10" fill="#e8e8e8" stroke="#b9b9b9"/><path d="M5 2H8M9.5 2H13M5 5.5H8M9.5 5.5H13M5 9H8M9.5 9H13" stroke="#6b6b6b" stroke-width="1"/></svg>
<svg class="a" style="left:454px;top:64px" width="7" height="5" viewBox="0 0 7 5"><path d="M0 0H7L3.5 4Z" fill="#333"/></svg>
<div class="a" style="left:482px;top:59.5px;width:13px;height:13px;border-radius:50%;background:#1565c0"></div>
<div class="t" style="left:485.5px;top:62px;font-size:9px;font-weight:bold;color:#fff">?</div>

<!-- content area -->
<div class="a" style="left:7px;top:77px;width:498px;height:189px;background:#fff"></div>
<!-- nav scrollbar -->
<div class="a" style="left:111px;top:77px;width:11px;height:189px;background:#f0f0f0"></div>
<div class="a" style="left:111px;top:124px;width:11px;height:102px;background:#cdcdcd"></div>
<svg class="a" style="left:113px;top:82px" width="8" height="5" viewBox="0 0 8 5"><path d="M1 4L4 1L7 4" stroke="#505050" stroke-width="1.2" fill="none"/></svg>
<svg class="a" style="left:113px;top:258px" width="8" height="5" viewBox="0 0 8 5"><path d="M1 1L4 4L7 1" stroke="#505050" stroke-width="1.2" fill="none"/></svg>
<!-- nav items -->
<div class="a" style="left:7px;top:240px;width:104px;height:18px;background:#d9d9d9"></div>
<svg class="a" style="left:30px;top:80.8px" width="10" height="12" viewBox="0 0 10 12"><rect x="0.5" y="0.5" width="9" height="11" fill="#eef3f6" stroke="#9aa9b4"/><path d="M2.5 4H7.5M2.5 6H7.5M2.5 8H7.5" stroke="#5ba4c9" stroke-width="0.8"/></svg>
<div class="t" style="left:46px;top:83.1px;font-size:9px;color:#111;width:65px;overflow:hidden">Documenten</div>
<svg class="a" style="left:100px;top:82.8px" width="8" height="8" viewBox="0 0 8 8"><path d="M1 7L3.5 4.5M3 2.5L5.5 5M4.2 1.5L6.5 3.8" stroke="#8e8e8e" stroke-width="1.3"/></svg>
<svg class="a" style="left:29px;top:99.6px" width="12" height="10" viewBox="0 0 12 10"><rect x="0.5" y="0.5" width="11" height="9" fill="#dfe8ef" stroke="#8a9aa8"/><path d="M1 8.5L4 5.5L7 7L11 4V9H1Z" fill="#2f5f8f"/><rect x="1" y="1" width="10" height="3" fill="#a9c8e8"/></svg>
<div class="t" style="left:46px;top:100.9px;font-size:9px;color:#111;width:65px;overflow:hidden">Afbeeldingen</div>
<svg class="a" style="left:100px;top:100.6px" width="8" height="8" viewBox="0 0 8 8"><path d="M1 7L3.5 4.5M3 2.5L5.5 5M4.2 1.5L6.5 3.8" stroke="#8e8e8e" stroke-width="1.3"/></svg>
<div class="a" style="left:31px;top:116.7px;width:9px;height:12px;background:#f8d775;border-right:1px solid #e3bd55"></div>
<div class="t" style="left:46px;top:119px;font-size:9px;color:#111;width:65px;overflow:hidden">1 intro vlog</div>
<div class="a" style="left:31px;top:134.8px;width:9px;height:12px;background:#f8d775;border-right:1px solid #e3bd55"></div>
<div class="t" style="left:46px;top:137.1px;font-size:9px;color:#111;width:65px;overflow:hidden">17-10-2021</div>
<div class="a" style="left:31px;top:152.7px;width:9px;height:12px;background:#f8d775;border-right:1px solid #e3bd55"></div>
<div class="t" style="left:46px;top:155px;font-size:9px;color:#111;width:65px;overflow:hidden">filmpjes</div>
<div class="a" style="left:31px;top:170.9px;width:9px;height:12px;background:#f8d775;border-right:1px solid #e3bd55"></div>
<div class="t" style="left:46px;top:173.2px;font-size:9px;color:#111;width:65px;overflow:hidden">foto's voor youtube</div>
<div class="a" style="left:25px;top:194px;width:10px;height:12px;background:#f9e08e;border-right:1px solid #e8c96a"></div>
<svg class="a" style="left:28px;top:201px" width="9" height="6" viewBox="0 0 9 6"><path d="M2.8 1A2 2 0 1 0 2.8 5C4.5 5 4.5 1 6.2 1A2 2 0 1 1 6.2 5C4.5 5 4.5 1 2.8 1Z" stroke="#e0542a" stroke-width="1.2" fill="none"/></svg>
<div class="t" style="left:40px;top:197px;font-size:9px;color:#111;width:71px;overflow:hidden">Creative Cloud Files</div>
<svg class="a" style="left:23px;top:219px" width="14" height="10" viewBox="0 0 14 10"><path d="M3 9.5A2.6 2.6 0 0 1 2.6 4.3A3.8 3.8 0 0 1 9.5 3A2.9 2.9 0 0 1 11.2 9.5Z" fill="#0f78d4"/></svg>
<div class="t" style="left:40px;top:221.3px;font-size:9px;color:#111;width:71px;overflow:hidden">OneDrive - Personal</div>
<svg class="a" style="left:23px;top:243px" width="14" height="12" viewBox="0 0 14 12"><rect x="0.5" y="0.5" width="13" height="8.5" fill="#5bc0f5" stroke="#3a8fc7"/><path d="M4 11.5H10" stroke="#6a8aa0" stroke-width="1.2"/></svg>
<div class="t" style="left:40px;top:245.3px;font-size:9px;color:#111">Deze pc</div>

<!-- file list header -->
<div class="t" style="left:139px;top:83.5px;font-size:8.8px;color:#4c607a">Naam</div>
<svg class="a" style="left:228px;top:77px" width="8" height="5" viewBox="0 0 8 5"><path d="M1 4L4 1L7 4" stroke="#8a8a8a" stroke-width="1" fill="none"/></svg>
<div class="a" style="left:329px;top:79px;width:1px;height:17px;background:#e5e5e5"></div>
<div class="a" style="left:437px;top:79px;width:1px;height:17px;background:#e5e5e5"></div>
<div class="t" style="left:334.5px;top:83.5px;font-size:8.8px;color:#4c607a">Gewijzigd op</div>
<div class="t" style="left:443px;top:83.5px;font-size:8.8px;color:#4c607a">Type</div>
<svg class="a" style="left:141px;top:104.0px" width="8" height="11" viewBox="0 0 8 11"><path d="M0 0H6L8 2V11H0Z" fill="#0b2c4e"/><text x="1" y="8" font-family="Liberation Sans" font-weight="bold" font-size="4.5" fill="#5aa9e6">Ps</text></svg>
<div class="t" style="left:155px;top:105.0px;font-size:8.9px;color:#111">1.6-Documenten openen</div>
<div class="t" style="left:335px;top:105.8px;font-size:8.2px;color:#767676">19-10-2021 08:16</div>
<div class="t" style="left:443px;top:105.8px;font-size:8.8px;color:#767676;width:62px;overflow:hidden">Adobe Photoshop</div>
<svg class="a" style="left:141px;top:119.8px" width="8" height="11" viewBox="0 0 8 11"><path d="M0 0H6L8 2V11H0Z" fill="#0b2c4e"/><text x="1" y="8" font-family="Liberation Sans" font-weight="bold" font-size="4.5" fill="#5aa9e6">Ps</text></svg>
<div class="t" style="left:155px;top:120.8px;font-size:8.9px;color:#111">1.7-Zoomen en navigeren</div>
<div class="t" style="left:335px;top:121.6px;font-size:8.2px;color:#767676">19-10-2021 08:16</div>
<div class="t" style="left:443px;top:121.6px;font-size:8.8px;color:#767676;width:62px;overflow:hidden">Adobe Photoshop</div>
<svg class="a" style="left:141px;top:135.4px" width="8" height="11" viewBox="0 0 8 11"><path d="M0 0H6L8 2V11H0Z" fill="#0b2c4e"/><text x="1" y="8" font-family="Liberation Sans" font-weight="bold" font-size="4.5" fill="#5aa9e6">Ps</text></svg>
<div class="t" style="left:155px;top:136.4px;font-size:8.9px;color:#111">1.9-Bestanden opslaan</div>
<div class="t" style="left:335px;top:137.2px;font-size:8.2px;color:#767676">19-10-2021 08:16</div>
<div class="t" style="left:443px;top:137.2px;font-size:8.8px;color:#767676;width:62px;overflow:hidden">Adobe Photoshop</div>
<svg class="a" style="left:141px;top:151.1px" width="8" height="11" viewBox="0 0 8 11"><path d="M0 0H6L8 2V11H0Z" fill="#0b2c4e"/><text x="1" y="8" font-family="Liberation Sans" font-weight="bold" font-size="4.5" fill="#5aa9e6">Ps</text></svg>
<div class="t" style="left:155px;top:152.1px;font-size:8.9px;color:#111">1.11-Lagen exporteren</div>
<div class="t" style="left:335px;top:152.9px;font-size:8.2px;color:#767676">19-10-2021 08:16</div>
<div class="t" style="left:443px;top:152.9px;font-size:8.8px;color:#767676;width:62px;overflow:hidden">Adobe Photoshop</div>

<!-- h scrollbar -->
<div class="a" style="left:123px;top:254px;width:382px;height:12px;background:#f0f0f0"></div>
<div class="a" style="left:140px;top:254px;width:285px;height:12px;background:#cdcdcd"></div>
<svg class="a" style="left:129px;top:256px" width="6" height="8" viewBox="0 0 6 8"><path d="M4.5 1L1.5 4L4.5 7" stroke="#505050" stroke-width="1.2" fill="none"/></svg>
<svg class="a" style="left:496px;top:256px" width="6" height="8" viewBox="0 0 6 8"><path d="M1.5 1L4.5 4L1.5 7" stroke="#505050" stroke-width="1.2" fill="none"/></svg>

<!-- bottom form -->
<div class="t" style="left:36px;top:279px;font-size:8.6px;color:#111">Bestandsnaam:</div>
<div class="a" style="left:100px;top:274px;width:402px;height:18px;background:#fff;border:1px solid #a5a5a5"></div>
<div class="t" style="left:104.5px;top:279px;font-size:8.6px;color:#111">1.9-Bestanden opslaan</div>
<svg class="a" style="left:490px;top:280px" width="8" height="5" viewBox="0 0 8 5"><path d="M1 1L4 4L7 1" stroke="#555" stroke-width="1.1" fill="none"/></svg>
<div class="t" style="left:49px;top:298px;font-size:8.6px;color:#111">Opslaan als:</div>
<div class="a" style="left:100px;top:293px;width:402px;height:18px;background:#e3e3e3;border:1px solid #bdbdbd"></div>
<div class="a" style="left:101.5px;top:295px;width:386px;height:13px;border:1px dotted #7a7a7a"></div>
<div class="a" style="left:488px;top:294px;width:13px;height:16px;background:#e9e9e9"></div>
<div class="t" style="left:102.5px;top:298px;font-size:8.4px;color:#111">Photoshop (*.PSD;*.PDD;*.PSDT)</div>
<svg class="a" style="left:490px;top:300px" width="8" height="5" viewBox="0 0 8 5"><path d="M1 1L4 4L7 1" stroke="#555" stroke-width="1.1" fill="none"/></svg>

<div class="a" style="left:100px;top:319px;width:119px;height:27px;background:#e1e1e1;border:1px solid #adadad"></div>
<div class="t" style="left:100px;top:322px;width:119px;text-align:center;font-size:8.7px;color:#111;line-height:11px">Opslaan naar<br>clouddocumenten</div>
<div class="t" style="left:92px;top:351px;font-size:8.6px;color:#6d6d6d">Kleur:</div>
<svg class="a" style="left:118px;top:350.5px" width="11" height="11" viewBox="0 0 11 11"><rect x="0.5" y="0.5" width="10" height="10" fill="#fff" stroke="#333"/><path d="M2.2 5.5L4.4 7.7L8.8 2.8" stroke="#222" stroke-width="1.1" fill="none"/></svg>
<div class="t" style="left:131px;top:351px;font-size:8.7px;color:#2a7ad5;line-height:11px">ICC-profiel:  ProPhoto<br>RGB</div>
<div class="a" style="left:136px;top:361px;width:5px;height:1px;background:#2a7ad5"></div>

<div class="t" style="left:270px;top:320px;font-size:8.6px;color:#7b7b7b">Overige:</div>
<svg class="a" style="left:305px;top:319px" width="11" height="11" viewBox="0 0 11 11"><rect x="0.5" y="0.5" width="10" height="10" fill="#f4f4f4" stroke="#cfcfcf"/><path d="M2 5.5L4.3 7.8L8.8 2.8" stroke="#bdbdbd" stroke-width="1.1" fill="none"/></svg>
<div class="t" style="left:318px;top:320px;font-size:8.6px;color:#7b7b7b">Miniatuur</div>
<div class="a" style="left:318px;top:328.5px;width:6px;height:1px;background:#7b7b7b"></div>
<div class="a" style="left:306px;top:335px;width:100px;height:18px;background:#e1e1e1;border:1px solid #adadad"></div>
<div class="t" style="left:306px;top:340px;width:100px;text-align:center;font-size:8.7px;color:#111">Kopie opslaan...</div>
<div class="a" style="left:306px;top:358px;width:100px;height:18px;background:#e1e1e1;border:1px solid #adadad"></div>
<div class="t" style="left:306px;top:363px;width:100px;text-align:center;font-size:8.7px;color:#111">Info</div>
<div class="a" style="left:353px;top:391px;width:64px;height:18px;background:#e1e1e1;border:1px solid #0078d7"></div>
<div class="a" style="left:354px;top:392px;width:62px;height:16px;border:1px solid #0078d7;opacity:.6"></div>
<div class="t" style="left:353px;top:396px;width:64px;text-align:center;font-size:8.7px;color:#111">Opslaan</div>
<div class="a" style="left:428px;top:391px;width:65px;height:18px;background:#e1e1e1;border:1px solid #adadad"></div>
<div class="t" style="left:428px;top:396px;width:65px;text-align:center;font-size:8.7px;color:#111">Annuleren</div>
<svg class="a" style="left:15px;top:398px" width="9" height="6" viewBox="0 0 9 6"><path d="M1 5L4.5 1.5L8 5" stroke="#333" stroke-width="1.2" fill="none"/></svg>
<div class="t" style="left:28.5px;top:397.8px;font-size:8.8px;color:#111">Mappen verbergen</div>

<div class="a" style="left:72px;top:288px;width:5px;height:1px;background:#222"></div>
<div class="a" style="left:55px;top:307px;width:5px;height:1px;background:#222"></div>
<div class="a" style="left:369px;top:404px;width:6px;height:1px;background:#222"></div>
</div>
<svg class="a" style="left:496px;top:409px" width="8" height="8" viewBox="0 0 8 8"><g fill="#b8b8b8"><rect x="6" y="0" width="1" height="1"/><rect x="4" y="2" width="1" height="1"/><rect x="6" y="2" width="1" height="1"/><rect x="2" y="4" width="1" height="1"/><rect x="4" y="4" width="1" height="1"/><rect x="6" y="4" width="1" height="1"/><rect x="0" y="6" width="1" height="1"/><rect x="2" y="6" width="1" height="1"/><rect x="4" y="6" width="1" height="1"/><rect x="6" y="6" width="1" height="1"/></g></svg>
<!-- ===== TASKBAR ===== -->
<div class="a" id="taskbar" style="left:0;top:546px;width:1024px;height:30px;background:linear-gradient(to right,#343434 0px,#383838 300px,#3a3939 690px,#222 731px,#1f1f1f 1024px)"></div>
<div class="a" style="left:695px;top:546px;width:35px;height:30px;background:#676767"></div>
<svg class="a" style="left:12px;top:555px" width="13" height="12" viewBox="0 0 13 12"><path d="M0 1.8L5.3 1V5.6H0ZM6.2 0.9L13 0V5.6H6.2ZM0 6.4H5.3V11L0 10.2ZM6.2 6.4H13V12L6.2 11.1Z" fill="#fff"/></svg>
<div class="a" style="left:36px;top:546px;width:258px;height:30px;background:#f0f0f0"></div>
<svg class="a" style="left:44px;top:553px" width="14" height="15" viewBox="0 0 14 15"><circle cx="8.8" cy="5.2" r="4" fill="none" stroke="#3a3a3a" stroke-width="1.2"/><path d="M5.9 8.1L1.5 12.8" stroke="#3a3a3a" stroke-width="1.3"/></svg>
<div class="t" style="left:66px;top:555.5px;font-size:11.2px;color:#404040">Typ hier om te zoeken</div>
<svg class="a" style="left:300px;top:549px" width="60" height="24" viewBox="0 0 60 24" fill="none" stroke="#fff">
 <circle cx="11.7" cy="11.3" r="5.5" stroke-width="1.4"/>
 <path d="M42.5 7.5H50.5M42.5 15.5H50.5" stroke-width="1.3"/><rect x="43.5" y="9.5" width="6" height="4" stroke-width="1"/><path d="M42.5 6V17M50.5 6V17" stroke-width="0.9"/><circle cx="53" cy="8.5" r="1.1" fill="#fff" stroke="none"/><path d="M53 11V16" stroke-width="0.9"/>
</svg>
<!-- explorer -->
<svg class="a" style="left:378px;top:553px" width="17" height="15" viewBox="0 0 17 15"><path d="M0 1H6L7 2.5H17V14H0Z" fill="#f3c74a"/><rect x="0" y="4" width="17" height="10" fill="#fddf6b"/><rect x="5" y="7.5" width="7" height="6.5" fill="#2c8ad8"/><rect x="7" y="10" width="3" height="4" fill="#fddf6b"/></svg>
<div class="a" style="left:371px;top:574px;width:30px;height:2px;background:#9fcbee"></div>
<!-- chrome -->
<svg class="a" style="left:414.5px;top:552px" width="17" height="17" viewBox="0 0 17 17"><circle cx="8.5" cy="8.5" r="8" fill="#db4437"/><path d="M8.5 8.5L1.6 4.5A8 8 0 0 0 8.5 16.5Z" fill="#0f9d58"/><path d="M8.5 8.5L8.5 16.5A8 8 0 0 0 15.4 4.5Z" fill="#ffcd40"/><path d="M8.5 8.5L15.4 4.5A8 8 0 0 0 1.6 4.5Z" fill="#db4437"/><circle cx="8.5" cy="8.5" r="3.9" fill="#fff"/><circle cx="8.5" cy="8.5" r="3" fill="#4285f4"/></svg>
<!-- word -->
<svg class="a" style="left:450px;top:552px" width="18" height="16" viewBox="0 0 18 16"><rect x="4" y="0" width="14" height="16" rx="1" fill="#2b7cd3"/><rect x="4" y="8" width="14" height="8" fill="#185abd"/><rect x="0" y="3.5" width="10" height="10" rx="1" fill="#185abd"/><text x="1.2" y="11.8" font-family="Liberation Sans" font-weight="bold" font-size="8.5" fill="#fff">W</text></svg>
<!-- onedrive folder -->
<svg class="a" style="left:488px;top:552px" width="17" height="17" viewBox="0 0 17 17"><path d="M0 0H5L9 3V16L0 14Z" fill="#f5cf62"/><path d="M1 0H9V15H1Z" fill="#fbe08c"/><path d="M7 16A2.5 2.5 0 0 1 7.5 11.2A3.6 3.6 0 0 1 14 10.5A2.6 2.6 0 0 1 14.5 16Z" fill="#0f78d4"/></svg>
<!-- firefox -->
<svg class="a" style="left:522.5px;top:551px" width="18" height="18" viewBox="0 0 18 18"><circle cx="9" cy="10" r="7.8" fill="#ff7139"/><path d="M9 2C12 3 15 5 16.5 8A7.8 7.8 0 0 1 9 17.8C13 16 14 11 11 8Z" fill="#ff4f5e"/><circle cx="9" cy="10.5" r="4.3" fill="#7542e5"/><path d="M3 4C1 7 1.5 12 4 14C3 10 5 7 9 6C7 4 5 4 3 4Z" fill="#ffbd4f"/><path d="M13 0.5C14 2 14.5 3 14.5 4L11 3Z" fill="#ffbd4f"/></svg>
<div class="a" style="left:518px;top:574px;width:29px;height:2px;background:#9fcbee"></div>
<!-- excel -->
<svg class="a" style="left:559px;top:552px" width="18" height="16" viewBox="0 0 18 16"><rect x="4" y="0" width="14" height="16" rx="1" fill="#21a366"/><rect x="11" y="0" width="7" height="8" fill="#33c481"/><rect x="4" y="8" width="14" height="8" fill="#107c41"/><rect x="0" y="3.5" width="10" height="10" rx="1" fill="#107c41"/><text x="2" y="11.8" font-family="Liberation Sans" font-weight="bold" font-size="8.5" fill="#fff">X</text></svg>
<!-- zoom -->
<div class="a" style="left:596px;top:552px;width:16px;height:16px;border-radius:5px;background:#4a8cff"></div>
<svg class="a" style="left:598px;top:556px" width="12" height="8" viewBox="0 0 12 8"><rect x="0.5" y="1" width="7" height="6" rx="1.2" fill="#fff"/><path d="M8 3.5L11.5 1.5V6.5L8 4.5Z" fill="#fff"/></svg>
<!-- CC -->
<div class="a" style="left:632px;top:552px;width:16px;height:16px;border-radius:4px;background:linear-gradient(135deg,#ff3b3b,#e03fd8 40%,#ff9a3c 60%,#4bd06d 85%,#2fd2ff)"></div>
<svg class="a" style="left:634px;top:556px" width="12" height="8" viewBox="0 0 12 8"><path d="M3.5 1.2A2.8 2.8 0 1 0 3.5 6.8H8.5A2.8 2.8 0 1 0 8.5 1.2C6 1.2 5.5 6.8 3.5 6.8" fill="none" stroke="#fff" stroke-width="1.1"/></svg>
<div class="a" style="left:626px;top:574px;width:29px;height:2px;background:#9fcbee"></div>
<!-- Lrc -->
<div class="a" style="left:667px;top:553px;width:17px;height:15px;border-radius:3px;background:#001a33"></div>
<div class="t" style="left:668px;top:556px;font-size:8.4px;font-weight:bold;color:#3ea3ff;letter-spacing:-0.4px">Lrc</div>
<!-- Ps -->
<div class="a" style="left:704px;top:553px;width:16px;height:15px;border-radius:3px;background:#001e36"></div>
<div class="t" style="left:706px;top:556px;font-size:8.6px;font-weight:bold;color:#31a8ff">Ps</div>
<div class="a" style="left:695px;top:574px;width:35px;height:2px;background:#9fcbee"></div>
<!-- app -->
<div class="a" style="left:739px;top:551px;width:17px;height:17px;border-radius:50%;background:#1a3a44"></div>
<svg class="a" style="left:739px;top:551px" width="17" height="18" viewBox="0 0 17 18"><path d="M6 2L9 5L6 8Z" fill="#5fe0d8"/><path d="M7 6L11 9L8 11Z" fill="#48c5c0"/><path d="M2 13H15L13.5 15.5H3.5Z" fill="#fff"/><rect x="7" y="14" width="3" height="1" fill="#333"/></svg>
<!-- W circle -->
<div class="a" style="left:775.5px;top:551.5px;width:17px;height:17px;border-radius:50%;background:#fff"></div>
<svg class="a" style="left:777px;top:555px" width="14" height="10" viewBox="0 0 14 10"><path d="M1.8 1.5V5.5A2.6 2.6 0 0 0 7 5.5V3M7 3V5.5A2.6 2.6 0 0 0 12.2 5.5V1.5" stroke="#5f9fcc" stroke-width="1.6" fill="none"/></svg>
<!-- Br -->
<div class="a" style="left:812px;top:553px;width:17px;height:15px;border-radius:3px;background:#0f1a2e"></div>
<div class="t" style="left:813px;top:556px;font-size:8.6px;font-weight:bold;color:#fff">Br</div>
<div class="a" style="left:806px;top:574px;width:29px;height:2px;background:#9fcbee"></div>
<!-- tray -->
<svg class="a" style="left:843px;top:551px" width="92" height="18" viewBox="0 0 92 18" fill="none" stroke="#f0f0f0">
 <path d="M2.5 12.5L6.5 8.3L10.5 12.5" stroke-width="1.1"/>
 <rect x="20.5" y="7.5" width="10" height="6.5" stroke-width="1"/><rect x="22" y="9" width="7" height="3.5" fill="#f0f0f0" stroke="none"/><path d="M19 4.5V8.5M17.5 6H20.5M19 8.5L20.5 9.5" stroke-width="0.9"/>
 <path d="M43.3 14A3.2 3.2 0 0 1 46.5 10.8M40.3 14A6.2 6.2 0 0 1 46.5 7.8M37.3 14A9.2 9.2 0 0 1 46.5 4.8" stroke-width="1"/><circle cx="46.8" cy="14" r="1.2" fill="#f0f0f0" stroke="none"/>
 <path d="M54.5 8.5H56.8L60.5 5.2V14.8L56.8 11.5H54.5Z" stroke-width="1"/><path d="M62.5 8A2.6 2.6 0 0 1 62.5 12M64.5 5.8A5.4 5.4 0 0 1 64.5 14.2" stroke-width="1"/>
 <path d="M77.5 15C75.5 16 74.5 13.5 76.5 12.2L84 5.2C85.5 4 87.5 5.5 86 7L78.8 14" stroke-width="1.2"/><circle cx="86.5" cy="9.5" r="1.6" stroke-width="1"/>
</svg>
<div class="t" style="left:949.5px;top:548.6px;font-size:8.4px;color:#fff;transform:scaleY(1.14);transform-origin:0 0">09:38</div>
<div class="t" style="left:939.5px;top:562.3px;font-size:8.3px;color:#fff;transform:scaleY(1.14);transform-origin:0 0">19-10-2021</div>
<svg class="a" style="left:992px;top:553px" width="16" height="15" viewBox="0 0 16 15"><path d="M1 1H15V10.5H9L7.5 13L6 10.5H1Z" fill="none" stroke="#fff" stroke-width="1.1"/></svg>
<div class="a" style="left:1019px;top:546px;width:1px;height:30px;background:#777"></div>

</div>
</body></html>
